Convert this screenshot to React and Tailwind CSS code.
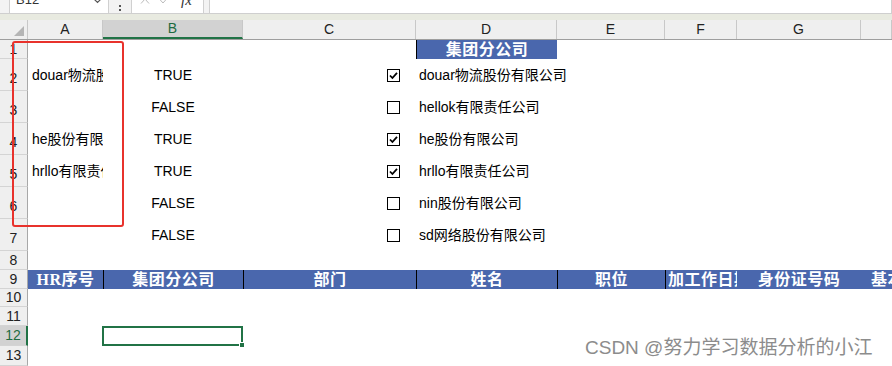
const COLS = [
  { key: "A", w: "w-[75px]" },
  { key: "B", w: "w-[140px]" },
  { key: "C", w: "w-[173px]" },
  { key: "D", w: "w-[141px]" },
  { key: "E", w: "w-[108px]" },
  { key: "F", w: "w-[72px]" },
  { key: "G", w: "w-[124px]" },
  { key: "H", w: "flex-1" },
];

const FORM_ROWS = [
  { n: 2, a: "douar物流股份有限公司", b: "TRUE", checked: true, d: "douar物流股份有限公司" },
  { n: 3, a: "", b: "FALSE", checked: false, d: "hellok有限责任公司" },
  { n: 4, a: "he股份有限公司", b: "TRUE", checked: true, d: "he股份有限公司" },
  { n: 5, a: "hrllo有限责任公司", b: "TRUE", checked: true, d: "hrllo有限责任公司" },
  { n: 6, a: "", b: "FALSE", checked: false, d: "nin股份有限公司" },
  { n: 7, a: "", b: "FALSE", checked: false, d: "sd网络股份有限公司" },
];

const HEADERS = ["HR序号", "集团分公司", "部门", "姓名", "职位", "加工作日期", "身份证号码", "基本工资"];

const font = "font-['Liberation_Sans','Noto_Sans_CJK_SC',sans-serif]";
const headFont = "font-['Liberation_Serif','Noto_Sans_CJK_SC',serif]";

function RowHead({ n, tall, active }) {
  return (
    <div
      className={`w-[28px] shrink-0 flex justify-center border-b border-[#d4d4d4] text-[14px] ${
        tall ? "items-end pb-[1px]" : "items-center"
      } ${
        active
          ? "bg-[#d2d2d2] text-[#1e6b41] border-r-2 border-r-[#217346]"
          : "bg-[#efefef] text-[#222] border-r border-r-[#a8a8a8]"
      }`}
    >
      {n}
    </div>
  );
}

function CheckBox({ checked }) {
  return (
    <div className="w-[13px] h-[13px] border border-black bg-white flex items-center justify-center">
      {checked && (
        <svg width="9" height="9" viewBox="0 0 9 9">
          <path d="M1 4.5 L3.4 7 L8 1.8" fill="none" stroke="black" strokeWidth="1.8" />
        </svg>
      )}
    </div>
  );
}

function FormRow({ row }) {
  return (
    <div className="flex h-[32px]">
      <RowHead n={row.n} tall />
      <div className="w-[75px] flex items-center pl-[4px] overflow-hidden whitespace-nowrap">{row.a}</div>
      <div className="w-[140px] flex items-center justify-center">{row.b}</div>
      <div className="w-[173px] flex items-center justify-end pr-[16px]">
        <CheckBox checked={row.checked} />
      </div>
      <div className="w-[141px] flex items-center pl-[3px] whitespace-nowrap">{row.d}</div>
      <div className="flex-1" />
    </div>
  );
}

function EmptyRow({ n, h, active, children }) {
  return (
    <div className={`flex ${h}`}>
      <RowHead n={n} active={active} />
      {children || <div className="flex-1" />}
    </div>
  );
}

export default function App() {
  return (
    <div className={`relative w-[892px] h-[366px] overflow-hidden bg-white ${font} text-[14px] text-black`}>
      {/* formula bar, cut at the top */}
      <div className="h-[13px] bg-[#f3f3f3] flex items-end overflow-hidden">
        <div className="ml-[9px] w-[100px] h-[22px] bg-white border border-[#d0d0d0] rounded-[4px] flex items-center justify-between px-[6px] -mb-[4px]">
          <span className="text-[13px] text-[#333] -mt-[12px]">B12</span>
          <svg width="9" height="6" viewBox="0 0 9 6" className="-mt-[10px]">
            <path d="M1 1 L4.5 4.5 L8 1" fill="none" stroke="#555" strokeWidth="1.2" />
          </svg>
        </div>
        <div className="w-[22px] flex flex-col items-center gap-[2px] mb-[2px]">
          <span className="w-[2px] h-[2px] bg-[#555]" />
          <span className="w-[2px] h-[2px] bg-[#555]" />
        </div>
        <div className="w-[73px] h-[22px] bg-white border border-[#d0d0d0] rounded-[4px] -mb-[4px] flex items-start gap-[8px] px-[8px] pt-[2px]">
          <svg width="10" height="6" viewBox="0 0 10 6"><path d="M1 5.5 L5 1 L9 5.5" fill="none" stroke="#bbb" strokeWidth="1" /></svg>
          <svg width="10" height="6" viewBox="0 0 10 6"><path d="M1 0.5 L5 5 L9 0.5" fill="none" stroke="#bbb" strokeWidth="1" /></svg>
          <span className="ml-[5px] -mt-[9px] italic text-[15px] text-[#333] font-['Liberation_Serif',serif]">fx</span>
        </div>
        <div className="ml-[5px] flex-1 h-[22px] bg-white border border-[#d0d0d0] rounded-[4px] -mb-[4px]" />
      </div>
      <div className="h-[7px] bg-[#e8eae0] border-t border-[#cfcfcf]" />

      {/* column headers */}
      <div className="flex h-[20px] bg-[#efefef] border-b border-[#9e9e9e]">
        <div className="w-[28px] shrink-0 border-r border-[#c8c8c8] relative">
          <svg width="10" height="10" viewBox="0 0 10 10" className="absolute right-[3px] bottom-[3px]">
            <path d="M10 0 L10 10 L0 10 Z" fill="#b5b5b5" />
          </svg>
        </div>
        {COLS.map((c) => (
          <div
            key={c.key}
            className={`${c.w} shrink-0 flex items-center justify-center text-[14px] border-r border-[#c8c8c8] ${
              c.key === "B" ? "bg-[#d2d2d2] text-[#1e6b41] border-b-2 border-b-[#217346]" : "text-[#222]"
            }`}
          >
            {c.key === "H" ? "" : c.key}
          </div>
        ))}
      </div>

      {/* row 1 */}
      <div className="flex h-[19px]">
        <RowHead n={1} />
        <div className="w-[388px]" />
        <div className={`w-[141px] bg-[#4a67ad] border-l border-black flex items-center justify-center text-white text-[16px] font-bold tracking-[0.5px] ${headFont}`}>
          集团分公司
        </div>
        <div className="flex-1" />
      </div>

      {FORM_ROWS.map((r) => (
        <FormRow key={r.n} row={r} />
      ))}

      <EmptyRow n={8} h="h-[19px]" />

      {/* row 9 header band */}
      <div className="flex h-[19px]">
        <RowHead n={9} />
        <div className={`flex-1 flex bg-[#4a67ad] text-white text-[16px] font-bold tracking-[0.5px] whitespace-nowrap ${headFont}`}>
          {HEADERS.map((h, i) => {
            const c = COLS[i];
            const align =
              c.key === "F" ? "justify-start pl-[2px]" : c.key === "H" ? "justify-start pl-[10px]" : "justify-center";
            const divider = ["B", "C", "D", "E", "F"].includes(c.key) ? "border-l border-black" : "";
            return (
              <div key={c.key} className={`${c.w} shrink-0 flex items-center overflow-hidden ${align} ${divider}`}>
                {h}
              </div>
            );
          })}
        </div>
      </div>

      <EmptyRow n={10} h="h-[18px]" />
      <EmptyRow n={11} h="h-[19px]" />
      <EmptyRow n={12} h="h-[20px]" active>
        <div className="w-[75px]" />
        <div className="w-[141px] -ml-[1px] border-2 border-[#217346] relative">
          <div className="absolute -right-[4px] -bottom-[4px] w-[6px] h-[6px] bg-[#217346] border border-white" />
        </div>
        <div className="flex-1" />
      </EmptyRow>
      <EmptyRow n={13} h="h-[20px]" />
      <EmptyRow n={14} h="h-[20px]" />

      {/* red annotation frame */}
      <div className="absolute left-[12px] top-[41px] w-[112px] h-[186px] border-2 border-[#e8322c] rounded-[3px]" />

      {/* watermark */}
      <div className="absolute left-[585px] top-[334px] text-[19px] text-[#8c8c8c] whitespace-nowrap">
        CSDN @努力学习数据分析的小江
      </div>
    </div>
  );
}
